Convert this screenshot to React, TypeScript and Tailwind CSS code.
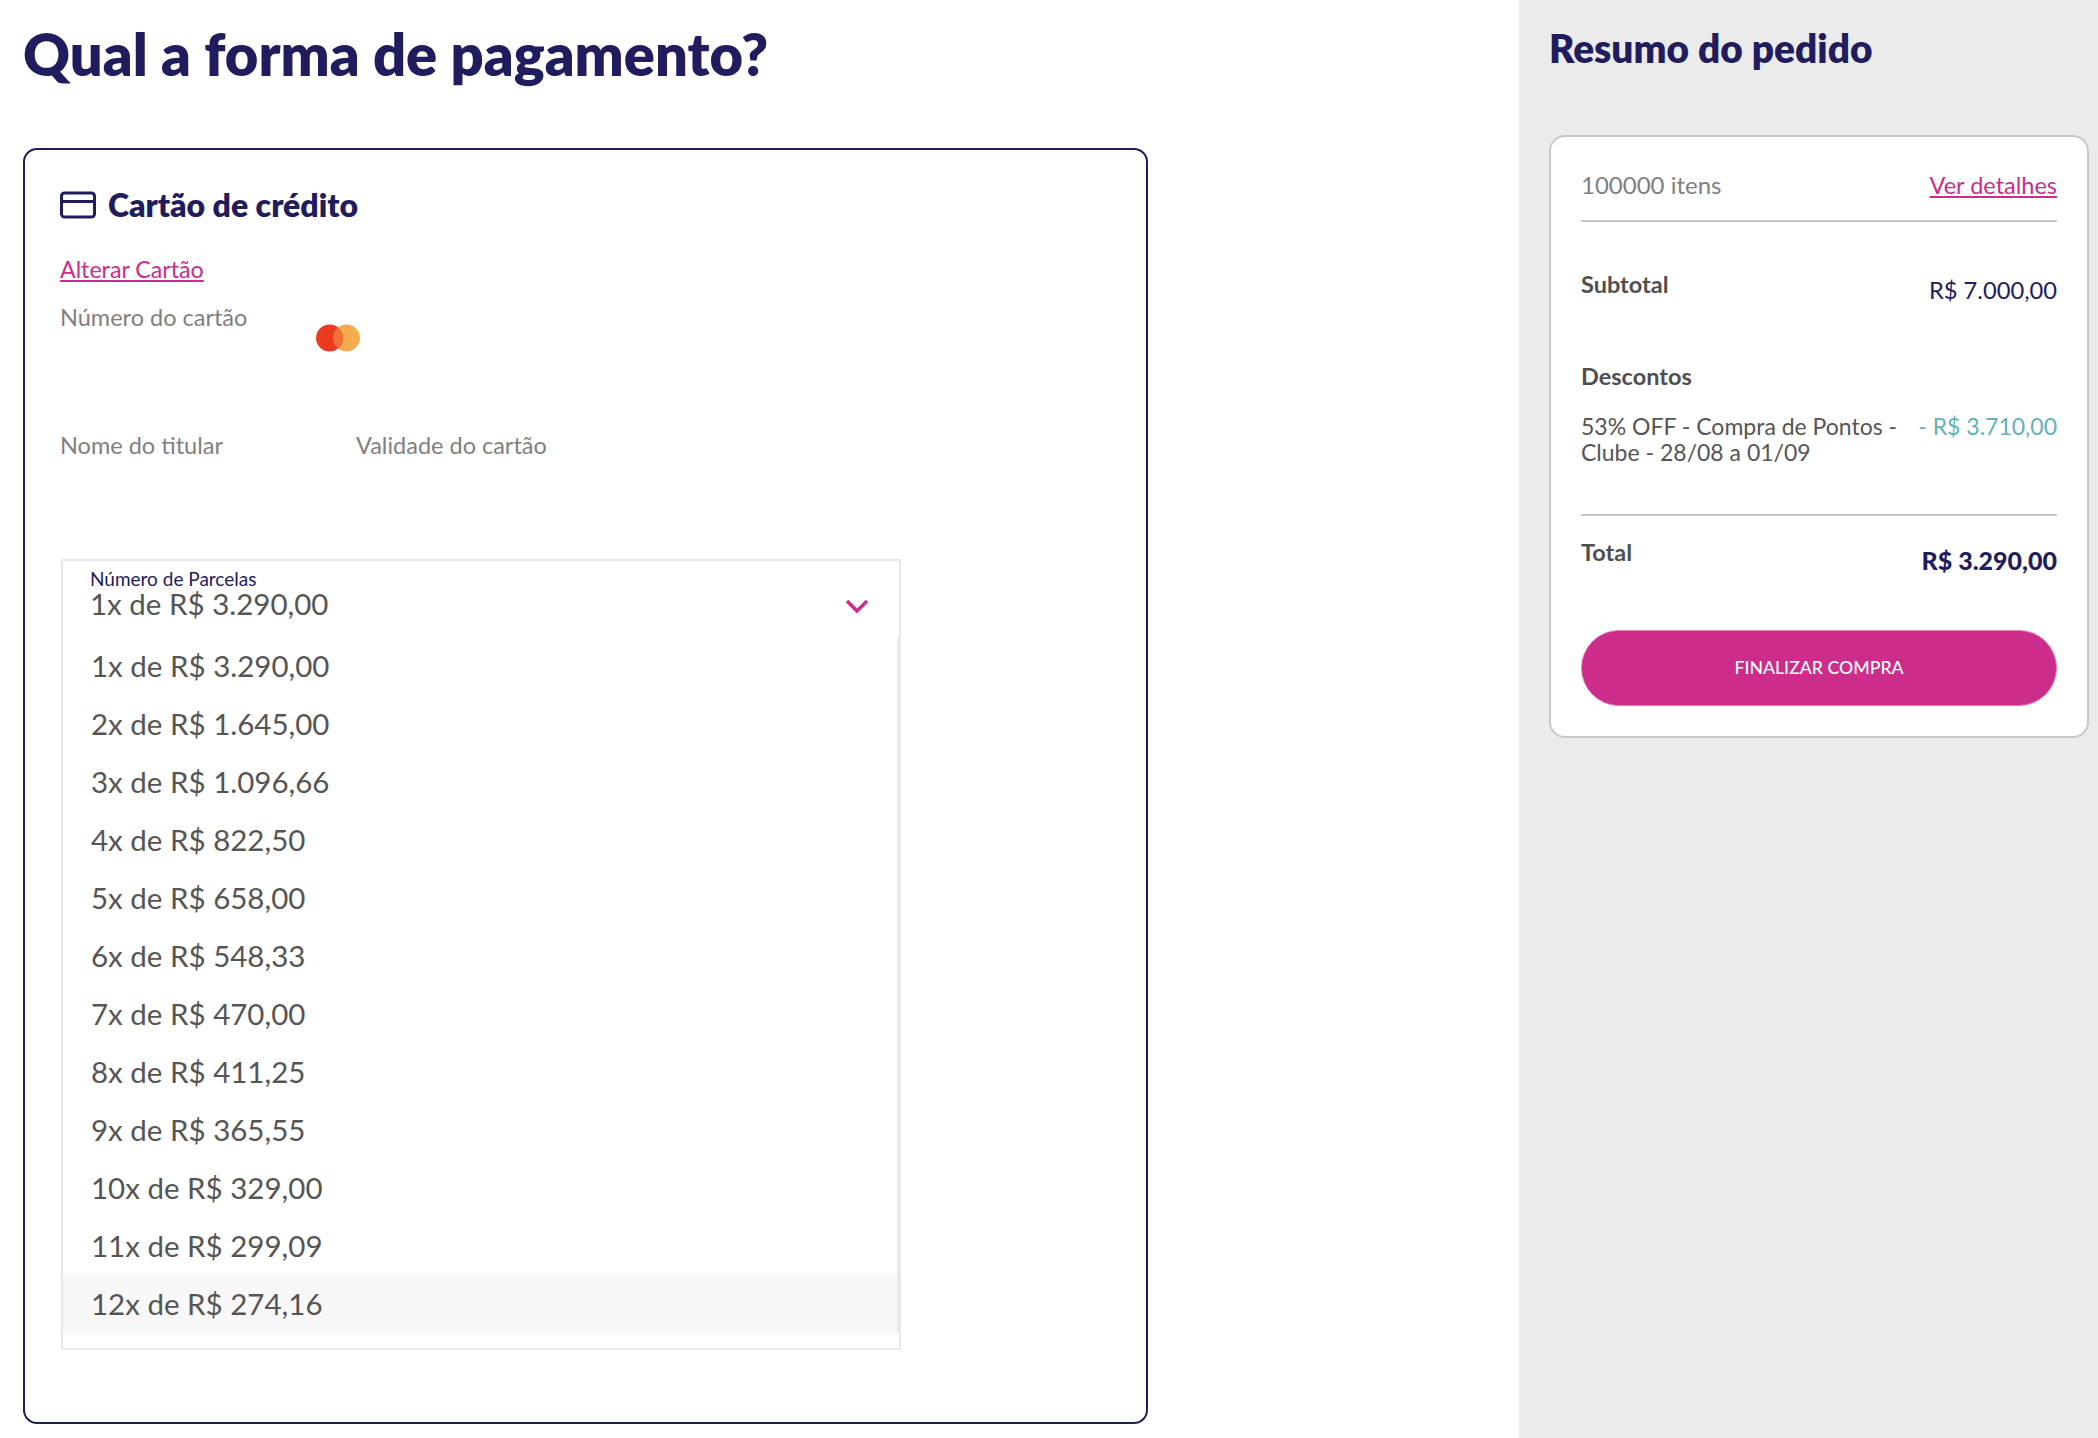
const parcelas = [
  '1x de R$ 3.290,00',
  '2x de R$ 1.645,00',
  '3x de R$ 1.096,66',
  '4x de R$ 822,50',
  '5x de R$ 658,00',
  '6x de R$ 548,33',
  '7x de R$ 470,00',
  '8x de R$ 411,25',
  '9x de R$ 365,55',
  '10x de R$ 329,00',
  '11x de R$ 299,09',
  '12x de R$ 274,16',
]

function CardIcon() {
  return (
    <svg width="36" height="28" viewBox="0 0 36 28" fill="none" stroke="#211c5e" strokeWidth="3">
      <rect x="1.500" y="2" width="33" height="24" rx="3" />
      <path d="M1.500 10.500h33" />
    </svg>
  )
}

function MasterIcon() {
  return (
    <svg width="44" height="28" viewBox="0 0 44 28">
      <circle cx="30.500" cy="14" r="13.500" fill="#f4ac4f" />
      <circle cx="13.500" cy="14" r="13.500" fill="#ea3a1f" />
      <path d="M22 3.500a13.500 13.500 0 0 1 0 21a13.500 13.500 0 0 1 0-21z" fill="#f0713a" />
    </svg>
  )
}

export default function App() {
  return (
    <div className="flex h-[1438px] overflow-hidden bg-white font-['Lato',sans-serif]">
      <main className="flex-1 pl-[23px] pt-[18px]">
        <h1 className="text-[57.800px] leading-[72px] font-extrabold text-[#211c5e]">Qual a forma de pagamento?</h1>
        <div className="mt-[58px] w-[1125px] h-[1276px] border-2 border-[#211c5e] rounded-[14px] px-[35px] pt-[35px]">
          <div className="flex items-center gap-3">
            <CardIcon />
            <h2 className="text-[32px] leading-[40px] font-extrabold text-[#211c5e]">Cartão de crédito</h2>
          </div>
          <a className="block mt-[29px] text-[23.200px] leading-[30px] text-[#cc2c8a] underline">Alterar Cartão</a>
          <div className="flex mt-[15px] h-[131px]">
            <span className="w-[256px] text-[23.500px] leading-[36px] text-[#7f7f7f]">Número do cartão</span>
            <div className="mt-[25px]"><MasterIcon /></div>
          </div>
          <div className="flex text-[23.500px] leading-[30px] text-[#7f7f7f]">
            <span className="w-[296px]">Nome do titular</span>
            <span>Validade do cartão</span>
          </div>
          <div className="mt-[99px] ml-[1px] w-[840px] h-[791px] border-2 border-[#e8e8e8] pb-4">
            <div className="relative h-[76px] pl-[27px] pt-[8px]">
              <div className="text-[19px] leading-[20px] text-[#211c5e]">Número de Parcelas</div>
              <div className="text-[29.500px] leading-[30px] text-[#555555]">1x de R$ 3.290,00</div>
              <svg className="absolute right-[30px] top-[37px]" width="24" height="16" viewBox="0 0 24 16" fill="none" stroke="#cc2c8a" strokeWidth="3.500">
                <path d="M2 3l10 10 10-10" />
              </svg>
            </div>
            <ul className="border-r-2 border-[#e8e8e8]">
              {parcelas.map((p, i) => (
                <li key={p} className={`h-[58px] pl-[28px] text-[29.500px] leading-[58px] text-[#555555] ${i === 11 ? 'bg-[#f8f8f8]' : ''}`}>{p}</li>
              ))}
            </ul>
          </div>
        </div>
      </main>
      <aside className="w-[579px] shrink-0 bg-[#ebebeb] pl-[30px] pr-[9px] pt-[23px]">
        <h2 className="text-[38.800px] leading-[50px] font-extrabold text-[#211c5e]">Resumo do pedido</h2>
        <div className="mt-[62px] h-[603px] rounded-[16px] border-2 border-[#c8c8c8] bg-white px-[30px]">
          <div className="flex justify-between h-[85px] pt-[32px] border-b-2 border-[#c8c8c8] text-[24px] leading-[32px]">
            <span className="text-[#7f7f7f]">100000 itens</span>
            <a className="text-[23.500px] text-[#cc2c8a] underline">Ver detalhes</a>
          </div>
          <div className="flex justify-between mt-[47px]">
            <span className="text-[23.500px] leading-[30px] font-bold text-[#4f4f4f]">Subtotal</span>
            <span className="mt-[6px] text-[23.700px] leading-[30px] text-[#211c5e]">R$ 7.000,00</span>
          </div>
          <div className="mt-[56px] text-[23.500px] leading-[30px] font-bold text-[#4f4f4f]">Descontos</div>
          <div className="flex justify-between mt-[22px] h-[101px] text-[23px] leading-[26px]">
            <span className="w-[325px] text-[#555555]">53% OFF - Compra de Pontos - Clube - 28/08 a 01/09</span>
            <span className="text-[#5fb3b8]">- R$ 3.710,00</span>
          </div>
          <div className="flex justify-between border-t-2 border-[#c8c8c8] pt-[21px]">
            <span className="text-[23.500px] leading-[30px] font-bold text-[#4f4f4f]">Total</span>
            <span className="mt-[8px] text-[25px] leading-[30px] font-black text-[#211c5e]">R$ 3.290,00</span>
          </div>
          <button className="mt-[55px] w-full h-[76px] rounded-full border border-[#e27bb8] bg-[#cc2c8a] text-[17.700px] font-medium text-white">FINALIZAR COMPRA</button>
        </div>
      </aside>
    </div>
  )
}
